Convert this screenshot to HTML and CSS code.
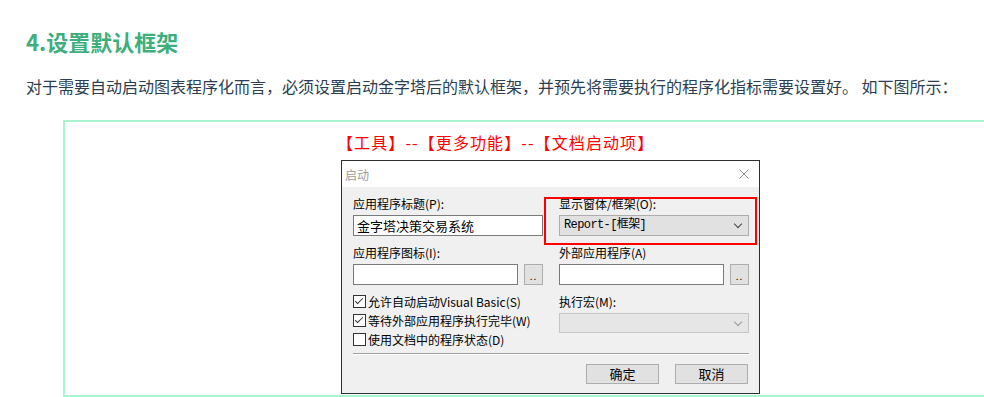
FILE: index.html
```html
<!DOCTYPE html>
<html lang="zh-CN">
<head>
    <meta charset="UTF-8">
    <meta name="viewport" content="width=device-width, initial-scale=1.0">
    <title>设置默认框架</title>
    <link rel="stylesheet" href="styles.css">
</head>
<body>
    <div class="article">
        <h2 class="title">4.设置默认框架</h2>
        <p class="lead">对于需要自动启动图表程序化而言，必须设置启动金字塔后的默认框架，并预先将需要执行的程序化指标需要设置好。 如下图所示：</p>

        <div class="figure-box">
            <div class="figure">
                <p class="caption">【工具】--【更多功能】--【文档启动项】</p>

                <div class="dialog">
                    <div class="dialog-title">
                        <span>启动</span>
                        <svg class="close" width="10" height="10" viewBox="0 0 10 10">
                            <path d="M0.5 0.5 L9.5 9.5 M9.5 0.5 L0.5 9.5" stroke="#8a8a8a" stroke-width="1" fill="none"/>
                        </svg>
                    </div>

                    <div class="dialog-body">
                        <div class="form-grid">
                            <!-- left column -->
                            <div class="col">
                                <div class="field">
                                    <label>应用程序标题(P):</label>
                                    <div class="textbox">金字塔决策交易系统</div>
                                </div>
                                <div class="field spaced">
                                    <label>应用程序图标(I):</label>
                                    <div class="browse-row">
                                        <div class="textbox"></div>
                                        <div class="dots">..</div>
                                    </div>
                                </div>
                                <div class="checks">
                                    <div class="check"><span class="box checked"></span>允许自动启动Visual Basic(S)</div>
                                    <div class="check"><span class="box checked"></span>等待外部应用程序执行完毕(W)</div>
                                    <div class="check"><span class="box"></span>使用文档中的程序状态(D)</div>
                                </div>
                            </div>

                            <!-- right column -->
                            <div class="col right">
                                <div class="highlight"></div>
                                <div class="field">
                                    <label>显示窗体/框架(O):</label>
                                    <div class="combo">Report-[框架]<span class="chev"></span></div>
                                </div>
                                <div class="field spaced">
                                    <label>外部应用程序(A)</label>
                                    <div class="browse-row">
                                        <div class="textbox"></div>
                                        <div class="dots">..</div>
                                    </div>
                                </div>
                                <div class="field spaced">
                                    <label>执行宏(M):</label>
                                    <div class="combo disabled"><span class="chev"></span></div>
                                </div>
                            </div>
                        </div>

                        <div class="sep"></div>

                        <div class="actions">
                            <div class="btn">确定</div>
                            <div class="btn">取消</div>
                        </div>
                    </div>
                </div>
            </div>
        </div>
    </div>
</body>
</html>
```

FILE: styles.css
```css
body {
    margin: 0;
    padding: 0;
    background: #fff;
    font-family: "Noto Sans CJK SC", "Noto Sans", sans-serif;
    overflow: hidden;
}

.article {
    padding: 0 26px;
}

.title {
    margin: 26px 0 0;
    font-size: 22px;
    line-height: 30px;
    font-weight: 700;
    color: #3eaf7c;
}

.lead {
    margin: 18px 0 0;
    font-size: 16px;
    line-height: 24px;
    color: #2c3e50;
    white-space: nowrap;
}

/* the frame runs on past the right edge of the window */
.figure-box {
    margin: 22px -26px 0 37px;
    border: 2px solid #a8f3d0;
    border-right: 0;
    padding: 10px 0 1px 276px;
}

.caption {
    margin: 0 0 8px -4px;
    font-size: 16px;
    line-height: 20px;
    color: #ff0000;
    letter-spacing: 1.1px;
}

/* windows dialog */
.dialog {
    width: 419px;
    box-sizing: border-box;
    border: 1px solid #2f2f2f;
    background: #f0f0f0;
    font-size: 12px;
    color: #000;
}

.dialog-title {
    height: 26px;
    background: #fff;
    display: flex;
    align-items: center;
    justify-content: space-between;
    padding: 0 10px 0 3px;
    color: #9a9a9a;
}

.close {
    display: block;
}

.dialog-body {
    padding: 10px 10px 9px 11px;
}

.form-grid {
    display: grid;
    grid-template-columns: 1fr 1fr;
    column-gap: 16px;
}

.col {
    display: flex;
    flex-direction: column;
}

.col.right {
    position: relative;
}

.field {
    display: flex;
    flex-direction: column;
    gap: 4px;
}

.field.spaced {
    margin-top: 10px;
}

.field label {
    line-height: 14px;
    height: 14px;
}

.textbox {
    height: 21px;
    box-sizing: border-box;
    border: 1px solid #7a7a7a;
    background: #fff;
    padding: 0 3px;
    line-height: 19px;
    font-size: 13px;
}

.browse-row {
    display: flex;
    gap: 6px;
}

.browse-row .textbox {
    flex: 1;
}

.dots {
    width: 19px;
    height: 21px;
    box-sizing: border-box;
    border: 1px solid #adadad;
    background: #e1e1e1;
    font-size: 10px;
    line-height: 22px;
    text-align: center;
    letter-spacing: 1px;
}

.combo {
    position: relative;
    height: 21px;
    box-sizing: border-box;
    border: 1px solid #adadad;
    background: #e1e1e1;
    padding: 0 4px;
    line-height: 19px;
    font-family: "Liberation Mono", "Noto Sans CJK SC", monospace;
    font-size: 12px;
    letter-spacing: -0.6px;
}

.combo.disabled {
    background: #e6e6e6;
    border-color: #c6c6c6;
    height: 20px;
}

.chev {
    position: absolute;
    right: 7px;
    top: 5px;
    width: 5px;
    height: 5px;
    border-right: 1px solid #444;
    border-bottom: 1px solid #444;
    transform: rotate(45deg);
}

.combo.disabled .chev {
    border-color: #9a9a9a;
}

.highlight {
    position: absolute;
    left: -15px;
    top: 0;
    width: 213px;
    height: 48px;
    box-sizing: border-box;
    border: 2px solid #ff0000;
    pointer-events: none;
}

.checks {
    margin-top: 7px;
}

.check {
    display: flex;
    align-items: center;
    height: 19px;
    white-space: nowrap;
}

.box {
    width: 13px;
    height: 13px;
    box-sizing: border-box;
    border: 1px solid #333;
    background: #fff;
    margin-right: 2px;
    position: relative;
}

.box.checked::after {
    content: "";
    position: absolute;
    left: 3px;
    top: 0px;
    width: 3px;
    height: 7px;
    border-right: 1px solid #333;
    border-bottom: 1px solid #333;
    transform: rotate(45deg);
}

.sep {
    margin-top: 4px;
    height: 1px;
    background: #a0a0a0;
    border-bottom: 1px solid #fff;
}

.actions {
    margin-top: 9px;
    display: flex;
    justify-content: flex-end;
    gap: 16px;
    padding-right: 1px;
}

.btn {
    width: 73px;
    height: 20px;
    box-sizing: border-box;
    border: 1px solid #adadad;
    background: #e1e1e1;
    text-align: center;
    line-height: 18px;
    font-size: 13px;
}
```
